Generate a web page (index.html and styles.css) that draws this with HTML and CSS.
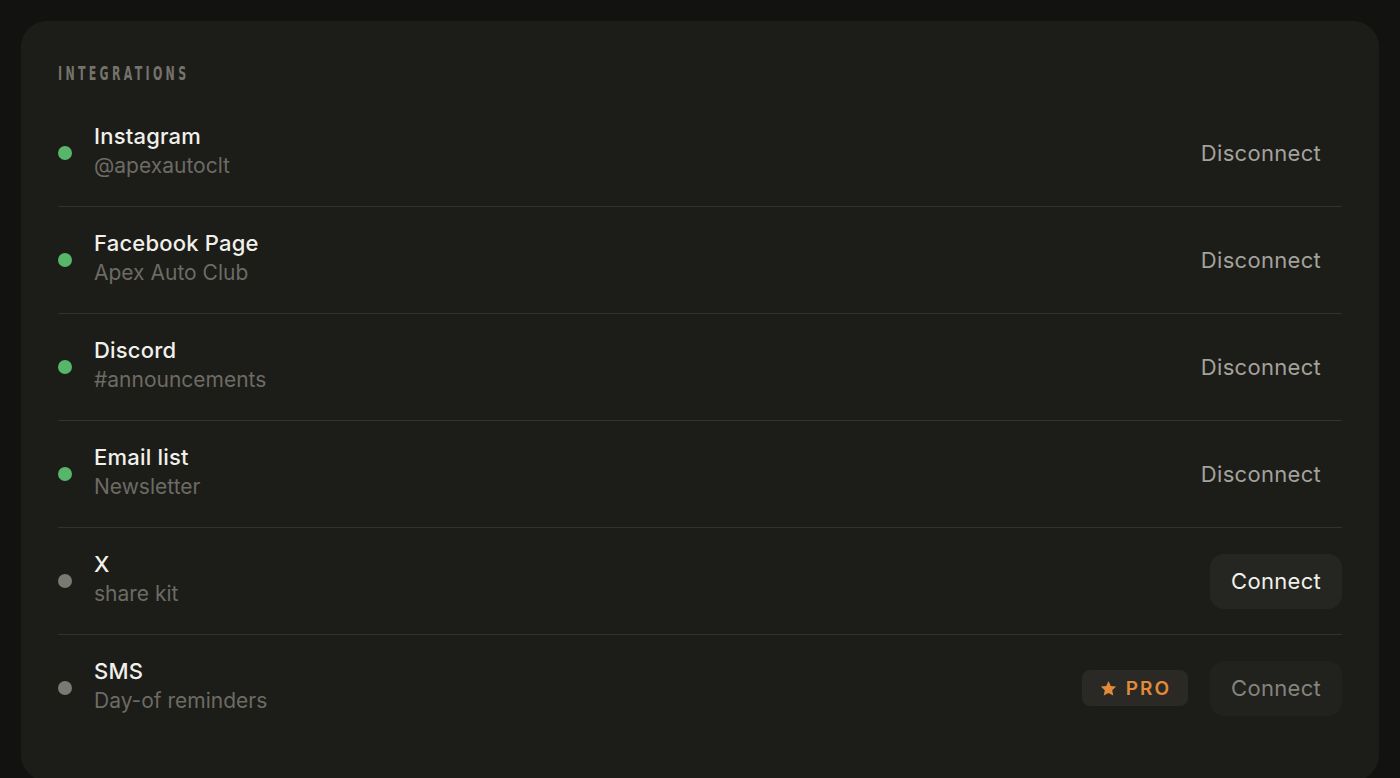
FILE: index.html
```html
<!DOCTYPE html>
<html>
<head>
<meta charset="utf-8">
<link rel="stylesheet" href="styles.css">
</head>
<body>
<div class="card">
  <div class="heading"><span class="heading-text">INTEGRATIONS</span></div>
  <div class="list">
    <div class="row">
      <span class="dot on"></span>
      <div class="info"><div class="name">Instagram</div><div class="sub">@apexautoclt</div></div>
      <div class="actions"><button class="btn ghost">Disconnect</button></div>
    </div>
    <div class="row">
      <span class="dot on"></span>
      <div class="info"><div class="name">Facebook Page</div><div class="sub">Apex Auto Club</div></div>
      <div class="actions"><button class="btn ghost">Disconnect</button></div>
    </div>
    <div class="row">
      <span class="dot on"></span>
      <div class="info"><div class="name">Discord</div><div class="sub">#announcements</div></div>
      <div class="actions"><button class="btn ghost">Disconnect</button></div>
    </div>
    <div class="row">
      <span class="dot on"></span>
      <div class="info"><div class="name">Email list</div><div class="sub">Newsletter</div></div>
      <div class="actions"><button class="btn ghost">Disconnect</button></div>
    </div>
    <div class="row">
      <span class="dot off"></span>
      <div class="info"><div class="name">X</div><div class="sub">share kit</div></div>
      <div class="actions"><button class="btn solid">Connect</button></div>
    </div>
    <div class="row">
      <span class="dot off"></span>
      <div class="info"><div class="name">SMS</div><div class="sub">Day-of reminders</div></div>
      <div class="actions">
        <span class="pro"><svg class="star" viewBox="0 0 24 24" width="19" height="19"><path d="M12 2.5l2.9 6.2 6.8.8-5 4.7 1.3 6.7L12 17.6l-6 3.3 1.3-6.7-5-4.7 6.8-.8z" fill="currentColor"/></svg>PRO</span>
        <button class="btn solid disabled">Connect</button>
      </div>
    </div>
  </div>
</div>
</body>
</html>
```

FILE: styles.css
```css
html, body {
  margin: 0;
  padding: 0;
  background: #121210;
  height: 100%;
  overflow: hidden;
}
body {
  padding: 21px;
  box-sizing: border-box;
  font-family: Inter, "Noto Sans", sans-serif;
}
.card {
  background: #1c1c19;
  border-radius: 26px;
  padding: 43px 37px 40px 37px;
}
.heading {
  height: 18px;
  margin-bottom: 18px;
}
.heading-text {
  display: inline-block;
  font-family: "DejaVu Sans", sans-serif;
  font-weight: 700;
  font-size: 19px;
  line-height: 18px;
  letter-spacing: 5.7px;
  color: #74736b;
  transform: scaleX(0.58);
  transform-origin: left center;
}
.row {
  display: flex;
  align-items: center;
  padding: 21px 0;
  border-bottom: 1px solid #33332e;
}
.row:last-child {
  border-bottom: none;
}
.dot {
  width: 14px;
  height: 14px;
  border-radius: 50%;
  margin-right: 22px;
  flex: none;
}
.dot.on { background: #58b66a; }
.dot.off { background: #7a7a72; }
.info {
  flex: 1;
  padding-bottom: 4px;
}
.name {
  font-size: 22px;
  line-height: 30px;
  font-weight: 500;
  letter-spacing: 0.2px;
  color: #f1f0ea;
}
.sub {
  font-size: 21px;
  line-height: 30px;
  color: #6c6b64;
}
.actions {
  display: flex;
  align-items: center;
  gap: 22px;
}
.btn {
  font-family: Inter, "Noto Sans", sans-serif;
  font-size: 22px;
  letter-spacing: 0.3px;
  height: 55px;
  padding: 0 21px;
  border: none;
  border-radius: 14px;
  background: transparent;
  cursor: pointer;
}
.btn.ghost {
  color: #a3a29b;
}
.btn.solid {
  background: #252521;
  color: #f1f0ea;
}
.btn.solid.disabled {
  background: #21211d;
  color: #85847d;
}
.pro {
  display: inline-flex;
  align-items: center;
  gap: 8px;
  height: 36px;
  padding: 0 17px;
  border-radius: 8px;
  background: #2a2925;
  color: #e08a3a;
  font-size: 19px;
  font-weight: 600;
  letter-spacing: 2px;
}
.star {
  flex: none;
}
```
